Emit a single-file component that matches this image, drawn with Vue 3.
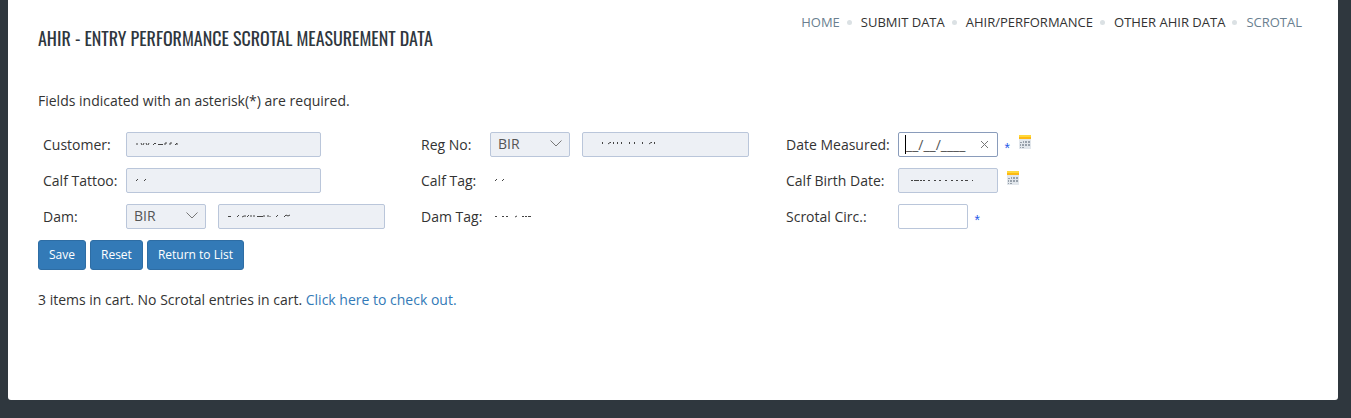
<script setup>
import { ref, onMounted } from 'vue'

const crumbs = [
  { text: 'HOME', muted: true },
  { text: 'SUBMIT DATA' },
  { text: 'AHIR/PERFORMANCE' },
  { text: 'OTHER AHIR DATA' },
  { text: 'SCROTAL', muted: true },
]

/* partly hidden values: only slivers of the characters are visible */
const slivers = {
  customer: 'M1 0V2M5 0L6 2M8 0L7 2M10 0L11 2M13 0L12 2M17 2L19 0L20 1M22 1.500H27M29 2V0H31M34 2V0H36M39 2L41 0V2',
  tattoo: 'M0 2L2 0M8 2L10 0',
  dam: 'M0 1.5H3M9 2L11 0M14 2L16 1H18M19 2L21 0M23 0V2M26 0V2M29 1.5H35M36 0V2M40 0V2M42 1V2M48 2L50 0M56 2L58 0L60 1L62 0',
  reg: 'M1.500 0V2M7 2L9 .5H10M12.500 0V2M16.500 0V2M20.500 0V2M28.500 0V2M33.500 0V2M41.500 0V2M48 2L50 .5H51M53.500 0V2',
  calfTag: 'M1 2L3 0M8 2L10 0',
  damTag: 'M1 1.500H3M8 1.500H10M12 1.500H14M21 2L23 1M28 1.500H30M31 1.500H33M34 1.500H37',
  birth: 'M0 .5H2M3 .5H8M9 .5H11M12 .5H14M17 .5H19M23 .5H25M28 .5H30M34 .5H36M40 .5H42M45 .5H47M50 .5H52M54 .5H57M61 .5H62',
}

const dateInput = ref(null)
const dateMeasured = ref('__/__/____')
onMounted(() => dateInput.value.focus())
</script>

<template>
  <main class="panel">
    <header class="head">
      <h1>AHIR - ENTRY PERFORMANCE SCROTAL MEASUREMENT DATA</h1>
      <nav aria-label="Breadcrumb">
        <ol class="crumbs">
          <li v-for="c in crumbs" :key="c.text"><a href="#" :class="{ muted: c.muted }">{{ c.text }}</a></li>
        </ol>
      </nav>
    </header>

    <p class="note">Fields indicated with an asterisk(*) are required.</p>

    <form @submit.prevent>
      <div class="fields">
        <div class="cell c1">
          <label for="customer">Customer:</label>
          <span class="box wide"><input id="customer" disabled><svg class="sliver" viewBox="0 0 70 4"><path :d="slivers.customer" /></svg></span>
        </div>
        <div class="cell c2">
          <label for="reg">Reg No:</label>
          <span class="box sel"><select id="reg" disabled><option>BIR</option></select><svg class="chev" viewBox="0 0 12 7"><path d="M.5 .5L6 6L11.5 .5" /></svg></span>
          <span class="box long reg"><input aria-label="Registration number" disabled><svg class="sliver" viewBox="0 0 70 4"><path :d="slivers.reg" /></svg></span>
        </div>
        <div class="cell c3">
          <label for="measured">Date Measured:</label>
          <span class="box date"><input id="measured" ref="dateInput" v-model="dateMeasured" class="active"><i class="caret"></i><button type="button" class="clear" aria-label="Clear date"><svg viewBox="0 0 9 9"><path d="M1 1L8 8M8 1L1 8" /></svg></button></span>
          <span class="star">*</span>
          <button type="button" class="cal" aria-label="Pick date measured"><svg viewBox="0 0 12 14"><path class="paper" d="M0 4H12V14H0Z" /><path class="gold" d="M0 0H12V4H0Z" /><path class="shade" d="M0 2H12V4H0Z" /><path class="days" d="M4 6h1v2H4zM6 6h2v2H6zM9 6h2v2H9zM1 7h2v1H1zM1 9h1v2H1zM3 9h2v2H3zM6 9h2v2H6zM9 9h2v2H9zM1 12h1v1H1zM3 12h2v1H3z" /></svg></button>
        </div>

        <div class="cell c1">
          <label for="tattoo">Calf Tattoo:</label>
          <span class="box wide"><input id="tattoo" disabled><svg class="sliver" viewBox="0 0 70 4"><path :d="slivers.tattoo" /></svg></span>
        </div>
        <div class="cell c2">
          <span class="label">Calf Tag:</span>
          <span class="box plain"><svg class="sliver" viewBox="0 0 70 4"><path :d="slivers.calfTag" /></svg></span>
        </div>
        <div class="cell c3">
          <label for="birth">Calf Birth Date:</label>
          <span class="box date birth"><input id="birth" disabled><svg class="sliver" viewBox="0 0 70 4"><path :d="slivers.birth" /></svg></span>
          <button type="button" class="cal" aria-label="Pick calf birth date"><svg viewBox="0 0 12 14"><path class="paper" d="M0 4H12V14H0Z" /><path class="gold" d="M0 0H12V4H0Z" /><path class="shade" d="M0 2H12V4H0Z" /><path class="days" d="M4 6h1v2H4zM6 6h2v2H6zM9 6h2v2H9zM1 7h2v1H1zM1 9h1v2H1zM3 9h2v2H3zM6 9h2v2H6zM9 9h2v2H9zM1 12h1v1H1zM3 12h2v1H3z" /></svg></button>
        </div>

        <div class="cell c1">
          <label for="dam">Dam:</label>
          <span class="box sel"><select id="dam" disabled><option>BIR</option></select><svg class="chev" viewBox="0 0 12 7"><path d="M.5 .5L6 6L11.5 .5" /></svg></span>
          <span class="box long"><input aria-label="Dam number" disabled><svg class="sliver" viewBox="0 0 70 4"><path :d="slivers.dam" /></svg></span>
        </div>
        <div class="cell c2">
          <span class="label">Dam Tag:</span>
          <span class="box plain"><svg class="sliver" viewBox="0 0 70 4"><path :d="slivers.damTag" /></svg></span>
        </div>
        <div class="cell c3">
          <label for="circ">Scrotal Circ.:</label>
          <span class="box short"><input id="circ"></span>
          <span class="star">*</span>
        </div>
      </div>

      <div class="actions">
        <button type="submit">Save</button>
        <button type="reset">Reset</button>
        <button type="button">Return to List</button>
      </div>
    </form>

    <p class="cart">3 items in cart. No Scrotal entries in cart. <a href="#">Click here to check out.</a></p>
  </main>
</template>

<style>
body {
  background: #2f373e;
}
</style>

<style scoped>
* {
  box-sizing: border-box;
}
.panel {
  margin: 0 13px 18px 8px;
  padding: 0 30px 90px;
  background: #fff;
  border-radius: 0 0 3px 3px;
  color: #333;
  font: 14px/20px "Open Sans", "Noto Sans", sans-serif;
}
.head {
  display: flex;
  justify-content: space-between;
  align-items: flex-start;
}
h1 {
  margin: 26px 0 0;
  font: 400 18px/24px "Oswald", "Liberation Sans Narrow", "Open Sans", sans-serif;
  color: #2f373e;
}
.crumbs {
  display: flex;
  margin: 12px 6px 0 0;
  padding: 0;
  list-style: none;
  font-size: 13px;
}
.crumbs li {
  display: flex;
  align-items: center;
}
.crumbs li + li::before {
  content: "";
  width: 5px;
  height: 5px;
  margin: 0 9px 0 7px;
  border-radius: 50%;
  background: #dbe1e4;
}
.crumbs a {
  color: #333;
  text-decoration: none;
}
.crumbs .muted {
  color: #6a7f90;
}
.note {
  margin: 41px 0 18px;
}
.fields {
  display: grid;
  grid-template-columns: minmax(max-content, 378fr) minmax(max-content, 365fr) minmax(max-content, 522fr);
  grid-auto-rows: 36px;
  padding-left: 5px;
}
.cell {
  display: flex;
  align-items: center;
  height: 30px;
}
.cell > :first-child {
  padding-top: 2px;
}
.c1 > :first-child {
  width: 83px;
}
.c2 > :first-child {
  width: 69px;
}
.c3 > :first-child {
  width: 112px;
}
.box {
  position: relative;
  display: block;
  height: 25px;
}
.box input,
.box select {
  display: block;
  width: 100%;
  height: 25px;
  padding: 0 7px;
  border: 1px solid #bac6da;
  border-radius: 2px;
  background: #fff;
  color: #555;
  font: 14px/20px "Open Sans", "Noto Sans", sans-serif;
  outline: none;
  appearance: none;
  opacity: 1;
}
.box :disabled {
  background: #edf0f5;
}
.box .active {
  border-color: #8a9cbb;
  caret-color: transparent;
}
.wide {
  width: 195px;
}
.sel {
  width: 80px;
  margin-right: 12px;
}
.long {
  width: 167px;
}
.date {
  width: 100px;
}
.short {
  width: 70px;
}
.plain {
  width: 70px;
}
.sliver {
  position: absolute;
  left: 10px;
  top: 11px;
  width: 70px;
  height: 4px;
  overflow: visible;
  fill: none;
  stroke: #444;
}
.reg .sliver {
  left: 19px;
  top: 10px;
}
.birth .sliver {
  left: 13px;
  top: 12px;
}
.plain .sliver {
  left: 4px;
}
.chev {
  position: absolute;
  right: 8px;
  top: 8px;
  width: 12px;
  height: 7px;
  fill: none;
  stroke: #777;
}
.caret {
  position: absolute;
  left: 7px;
  top: 3px;
  width: 1px;
  height: 19px;
  background: #000;
}
.clear {
  position: absolute;
  right: 8px;
  top: 8px;
  width: 12px;
  height: 9px;
  padding: 0;
  border: 0;
  background: none;
}
.clear svg {
  display: block;
  width: 9px;
  height: 9px;
  margin: 0 auto;
  fill: none;
  stroke: #777;
}
.star {
  width: 7px;
  margin: 12px 0 0 5px;
  color: #2659e8;
  font: 14px/20px "Liberation Mono", monospace;
}
.cal {
  width: 12px;
  height: 14px;
  margin: 0 0 4px 9px;
  padding: 0;
  border: 0;
  background: none;
}
.cal svg {
  display: block;
  width: 12px;
  height: 14px;
}
.paper {
  fill: #e2e7ec;
}
.gold {
  fill: #ffd83a;
}
.shade {
  fill: #fdb913;
}
.days {
  fill: #98a1ab;
}
.actions {
  display: flex;
  gap: 4px;
  margin-top: 3px;
}
.actions button {
  height: 30px;
  padding: 0 10px;
  border: 1px solid #2e6da4;
  border-radius: 3px;
  background: #337ab7;
  color: #fff;
  font: 12px/18px "Open Sans", "Noto Sans", sans-serif;
}
.cart {
  margin: 20px 0 0;
}
.cart a {
  color: #337ab7;
  text-decoration: none;
}
</style>
